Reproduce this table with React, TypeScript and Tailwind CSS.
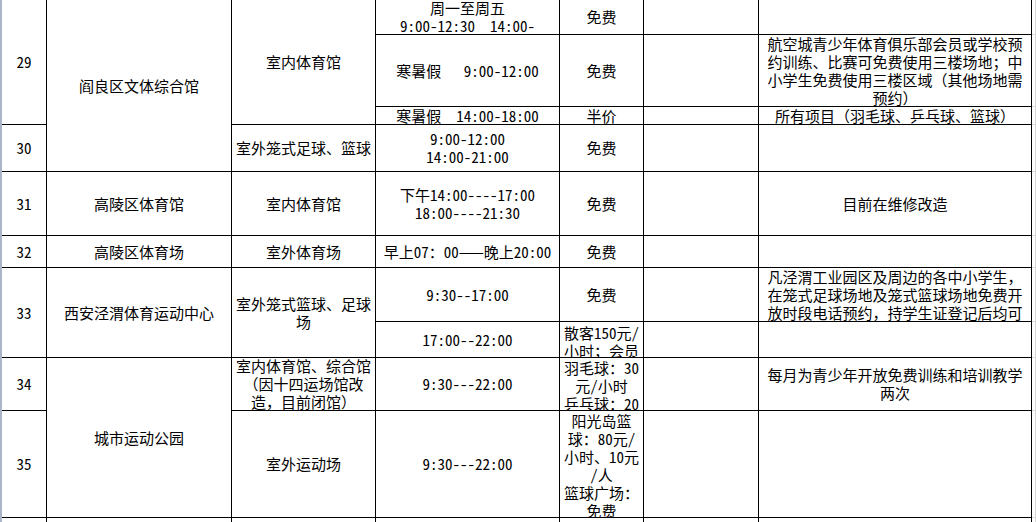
import React from "react";

const base =
  "flex items-center justify-center text-center overflow-hidden border-r border-b border-black whitespace-pre leading-[18px]";
const top =
  "flex items-start justify-center text-center overflow-hidden border-r border-b border-black whitespace-pre leading-[18px]";
const grey = "border-r border-b border-[#d9d9d9]";

export default function App() {
  return (
    <div className="h-[522px] w-[1036px] overflow-hidden bg-white text-black text-[15px] font-['Noto_Sans_Mono_CJK_SC','Noto_Sans_CJK_SC',sans-serif]">
      <div className="flex">
        <div className="w-[2px] shrink-0 bg-[#a9b6c6]" />
        <div className="grid grid-cols-[45px_185px_144px_184px_84px_115px_273px_4px] grid-rows-[35px_72px_18px_47px_64px_32px_54px_36px_53px_107px_40px]">
          {/* column 1: numbers */}
          <div className={`${base} col-start-1 row-start-1 row-span-3`}>29</div>
          <div className={`${base} col-start-1 row-start-4`}>30</div>
          <div className={`${base} col-start-1 row-start-5`}>31</div>
          <div className={`${base} col-start-1 row-start-6`}>32</div>
          <div className={`${base} col-start-1 row-start-7 row-span-2`}>33</div>
          <div className={`${base} col-start-1 row-start-9`}>34</div>
          <div className={`${base} col-start-1 row-start-10`}>35</div>
          <div className={`${base} col-start-1 row-start-11`}></div>

          {/* column 2: venue */}
          <div className={`${base} col-start-2 row-start-1 row-span-4`}>阎良区文体综合馆</div>
          <div className={`${base} col-start-2 row-start-5`}>高陵区体育馆</div>
          <div className={`${base} col-start-2 row-start-6`}>高陵区体育场</div>
          <div className={`${base} col-start-2 row-start-7 row-span-2`}>西安泾渭体育运动中心</div>
          <div className={`${base} col-start-2 row-start-9 row-span-2`}>城市运动公园</div>
          <div className={`${base} col-start-2 row-start-11`}></div>

          {/* column 3: type */}
          <div className={`${base} col-start-3 row-start-1 row-span-3`}>室内体育馆</div>
          <div className={`${base} col-start-3 row-start-4`}>室外笼式足球、篮球</div>
          <div className={`${base} col-start-3 row-start-5`}>室内体育馆</div>
          <div className={`${base} col-start-3 row-start-6`}>室外体育场</div>
          <div className={`${base} col-start-3 row-start-7 row-span-2`}>
            <div>{"室外笼式篮球、足球\n场"}</div>
          </div>
          <div className={`${base} col-start-3 row-start-9`}>
            <div>{"室内体育馆、综合馆\n（因十四运场馆改\n造，目前闭馆）"}</div>
          </div>
          <div className={`${base} col-start-3 row-start-10`}>室外运动场</div>
          <div className={`${base} col-start-3 row-start-11`}></div>

          {/* column 4: time */}
          <div className={`${base} col-start-4 row-start-1`}>
            <div>{"周一至周五\n9:00-12:30  14:00-"}</div>
          </div>
          <div className={`${base} col-start-4 row-start-2`}>{"寒暑假   9:00-12:00"}</div>
          <div className={`${base} col-start-4 row-start-3`}>{"寒暑假  14:00-18:00"}</div>
          <div className={`${base} col-start-4 row-start-4`}>
            <div>{"9:00-12:00\n14:00-21:00"}</div>
          </div>
          <div className={`${base} col-start-4 row-start-5`}>
            <div>{"下午14:00----17:00\n18:00----21:30"}</div>
          </div>
          <div className={`${base} col-start-4 row-start-6`}>早上07：00——晚上20:00</div>
          <div className={`${base} col-start-4 row-start-7`}>9:30--17:00</div>
          <div className={`${base} col-start-4 row-start-8`}>17:00--22:00</div>
          <div className={`${base} col-start-4 row-start-9`}>9:30---22:00</div>
          <div className={`${base} col-start-4 row-start-10`}>9:30---22:00</div>
          <div className={`${top} col-start-4 row-start-11 pt-[1px]`}>周一至周五</div>

          {/* column 5: price */}
          <div className={`${base} col-start-5 row-start-1`}>免费</div>
          <div className={`${base} col-start-5 row-start-2`}>免费</div>
          <div className={`${base} col-start-5 row-start-3`}>半价</div>
          <div className={`${base} col-start-5 row-start-4`}>免费</div>
          <div className={`${base} col-start-5 row-start-5`}>免费</div>
          <div className={`${base} col-start-5 row-start-6`}>免费</div>
          <div className={`${base} col-start-5 row-start-7`}>免费</div>
          <div className={`${top} col-start-5 row-start-8 pt-[2px]`}>
            <div>{"散客150元/\n小时；会员\n100元/小时"}</div>
          </div>
          <div className={`${top} col-start-5 row-start-9 pt-[1px]`}>
            <div>{"羽毛球：30\n元/小时\n乒乓球：20\n元/小时"}</div>
          </div>
          <div className={`${top} col-start-5 row-start-10 pt-[1px]`}>
            <div>{"阳光岛篮\n球：80元/\n小时、10元\n/人\n篮球广场：\n免费"}</div>
          </div>
          <div className={`${base} col-start-5 row-start-11`}></div>

          {/* column 6: empty */}
          <div className={`${base} col-start-6 row-start-1`}></div>
          <div className={`${base} col-start-6 row-start-2`}></div>
          <div className={`${base} col-start-6 row-start-3`}></div>
          <div className={`${base} col-start-6 row-start-4`}></div>
          <div className={`${base} col-start-6 row-start-5`}></div>
          <div className={`${base} col-start-6 row-start-6`}></div>
          <div className={`${base} col-start-6 row-start-7`}></div>
          <div className={`${base} col-start-6 row-start-8`}></div>
          <div className={`${base} col-start-6 row-start-9`}></div>
          <div className={`${base} col-start-6 row-start-10`}></div>
          <div className={`${base} col-start-6 row-start-11`}></div>

          {/* column 7: notes */}
          <div className={`${base} col-start-7 row-start-1`}></div>
          <div className={`${base} col-start-7 row-start-2`}>
            <div>{"航空城青少年体育俱乐部会员或学校预\n约训练、比赛可免费使用三楼场地；中\n小学生免费使用三楼区域（其他场地需\n预约）"}</div>
          </div>
          <div className={`${base} col-start-7 row-start-3`}>所有项目（羽毛球、乒乓球、篮球）</div>
          <div className={`${base} col-start-7 row-start-4`}></div>
          <div className={`${base} col-start-7 row-start-5`}>目前在维修改造</div>
          <div className={`${base} col-start-7 row-start-6`}></div>
          <div className={`${top} col-start-7 row-start-7`}>
            <div>{"凡泾渭工业园区及周边的各中小学生，\n在笼式足球场地及笼式篮球场地免费开\n放时段电话预约，持学生证登记后均可"}</div>
          </div>
          <div className={`${base} col-start-7 row-start-8`}></div>
          <div className={`${base} col-start-7 row-start-9`}>
            <div>{"每月为青少年开放免费训练和培训教学\n两次"}</div>
          </div>
          <div className={`${base} col-start-7 row-start-10`}></div>
          <div className={`${base} col-start-7 row-start-11`}></div>

          {/* column 8: sheet gridlines beyond table */}
          <div className={`${grey} col-start-8 row-start-1`}></div>
          <div className={`${grey} col-start-8 row-start-2`}></div>
          <div className={`${grey} col-start-8 row-start-3`}></div>
          <div className={`${grey} col-start-8 row-start-4`}></div>
          <div className={`${grey} col-start-8 row-start-5`}></div>
          <div className={`${grey} col-start-8 row-start-6`}></div>
          <div className={`${grey} col-start-8 row-start-7`}></div>
          <div className={`${grey} col-start-8 row-start-8`}></div>
          <div className={`${grey} col-start-8 row-start-9`}></div>
          <div className={`${grey} col-start-8 row-start-10`}></div>
          <div className={`${grey} col-start-8 row-start-11`}></div>
        </div>
      </div>
    </div>
  );
}
